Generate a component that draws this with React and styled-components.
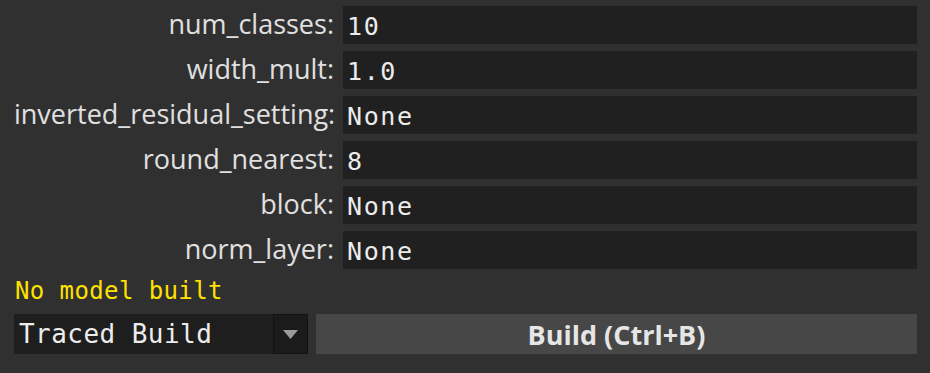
import React, { useState } from 'react';
import styled, { createGlobalStyle } from 'styled-components';

const GlobalStyle = createGlobalStyle`
    html, body {
        margin: 0;
        padding: 0;
        background-color: #303030;
    }
`;

const Panel = styled.div`
    display: flex;
    flex-direction: column;
    gap: 7px;
    width: 930px;
    height: 373px;
    box-sizing: border-box;
    padding: 6px 13px 0 14px;
    background-color: #303030;
`;

const ParamGrid = styled.div`
    display: grid;
    grid-template-columns: 320px 1fr;
    column-gap: 9px;
    row-gap: 7px;
`;

const Label = styled.label`
    text-align: right;
    font-family: "Open Sans", "Noto Sans", sans-serif;
    font-size: 27px;
    line-height: 36px;
    color: #e0e0e0;
    white-space: nowrap;
`;

const Input = styled.input`
    height: 38px;
    box-sizing: border-box;
    margin: 0;
    border: none;
    outline: none;
    padding: 3px 4px 0;
    background-color: #202020;
    color: #ececec;
    font-family: "DejaVu Sans Mono", monospace;
    font-size: 25px;
    letter-spacing: 1.6px;
    line-height: 35px;
`;

const Status = styled.div`
    font-family: "DejaVu Sans Mono", monospace;
    font-size: 24px;
    letter-spacing: 0.4px;
    line-height: 31px;
    color: #ffe100;
    padding-left: 1px;
`;

const ActionRow = styled.div`
    display: flex;
    gap: 8px;
    height: 40px;
`;

const Combo = styled.div`
    display: flex;
    width: 294px;
    background-color: #1e1e1e;
`;

const ComboValue = styled.div`
    flex: 1;
    padding: 0 5px;
    font-family: "DejaVu Sans Mono", monospace;
    font-size: 26px;
    letter-spacing: 0.45px;
    line-height: 40px;
    color: #ececec;
    white-space: nowrap;
`;

const ComboArrow = styled.div`
    display: flex;
    align-items: center;
    justify-content: center;
    width: 35px;
    box-sizing: border-box;
    background-color: #1b1b1b;
    border: 1px solid #121212;
`;

const BuildButton = styled.button`
    flex: 1;
    margin: 0;
    border: none;
    padding: 2px 0 0;
    background-color: #474747;
    color: #e6e6e6;
    font-family: "Open Sans", "Noto Sans", sans-serif;
    font-weight: 700;
    font-size: 27px;
    line-height: 38px;
    cursor: pointer;
`;

const params = [
    ['num_classes', '10'],
    ['width_mult', '1.0'],
    ['inverted_residual_setting', 'None'],
    ['round_nearest', '8'],
    ['block', 'None'],
    ['norm_layer', 'None'],
];

export default function App() {
    // Store param values
    const [fields, setFields] = useState(Object.fromEntries(params));

    function handleChange(e) {
        const { name, value } = e.target;
        setFields({ ...fields, [name]: value });
    }

    return (
        <>
            <GlobalStyle />
            <Panel>
                <ParamGrid>
                    {params.map(([name]) => (
                        <React.Fragment key={name}>
                            <Label htmlFor={name}>{name}:</Label>
                            <Input id={name} name={name} value={fields[name]} onChange={handleChange} />
                        </React.Fragment>
                    ))}
                </ParamGrid>
                <Status>No model built</Status>
                <ActionRow>
                    <Combo>
                        <ComboValue>Traced Build</ComboValue>
                        <ComboArrow>
                            <svg width="15" height="9" viewBox="0 0 15 9">
                                <polygon points="0,0 15,0 7.5,9" fill="#9b9b9b" />
                            </svg>
                        </ComboArrow>
                    </Combo>
                    <BuildButton>Build (Ctrl+B)</BuildButton>
                </ActionRow>
            </Panel>
        </>
    );
}
